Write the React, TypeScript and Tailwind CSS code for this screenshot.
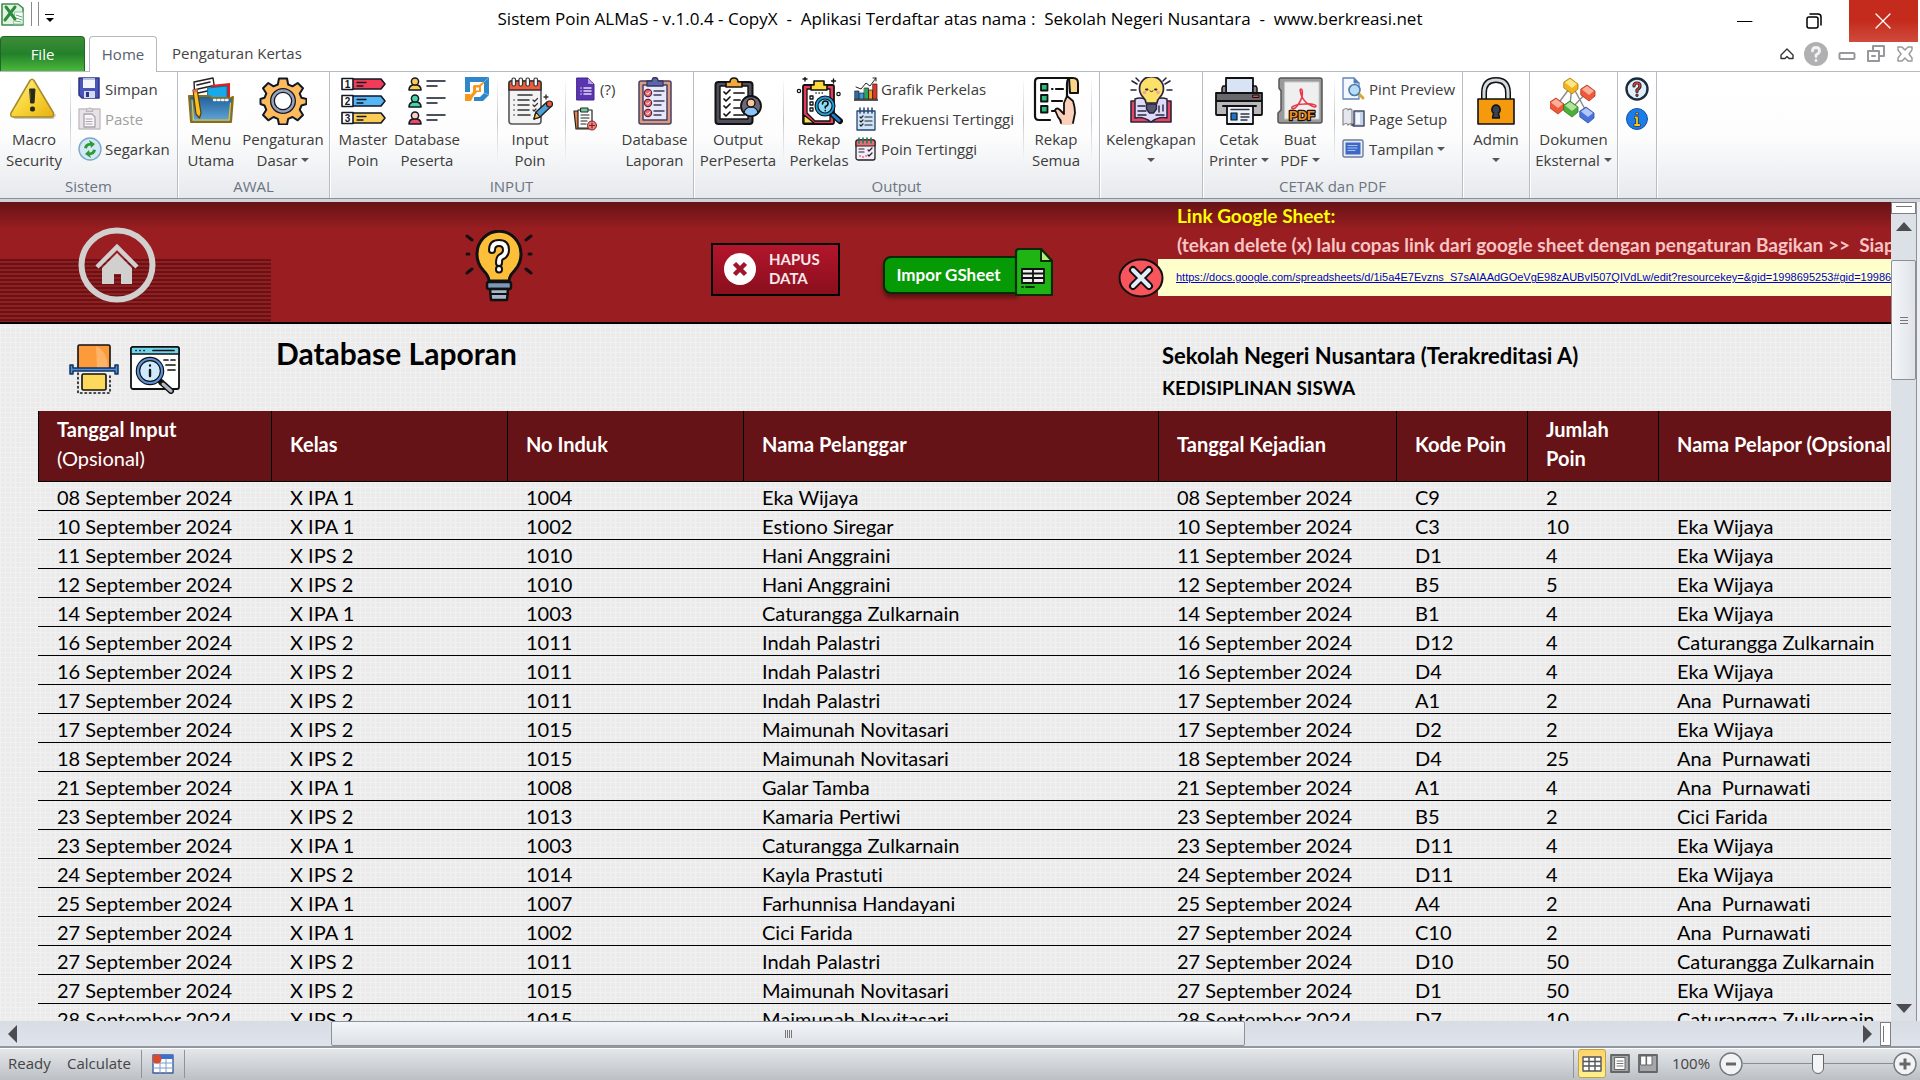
import type { ReactNode } from "react";

const ROWS: string[][] = [
  ["08 September 2024", "X IPA 1", "1004", "Eka Wijaya", "C9", "2", ""],
  ["10 September 2024", "X IPA 1", "1002", "Estiono Siregar", "C3", "10", "Eka Wijaya"],
  ["11 September 2024", "X IPS 2", "1010", "Hani Anggraini", "D1", "4", "Eka Wijaya"],
  ["12 September 2024", "X IPS 2", "1010", "Hani Anggraini", "B5", "5", "Eka Wijaya"],
  ["14 September 2024", "X IPA 1", "1003", "Caturangga Zulkarnain", "B1", "4", "Eka Wijaya"],
  ["16 September 2024", "X IPS 2", "1011", "Indah Palastri", "D12", "4", "Caturangga Zulkarnain"],
  ["16 September 2024", "X IPS 2", "1011", "Indah Palastri", "D4", "4", "Eka Wijaya"],
  ["17 September 2024", "X IPS 2", "1011", "Indah Palastri", "A1", "2", "Ana  Purnawati"],
  ["17 September 2024", "X IPS 2", "1015", "Maimunah Novitasari", "D2", "2", "Eka Wijaya"],
  ["18 September 2024", "X IPS 2", "1015", "Maimunah Novitasari", "D4", "25", "Ana  Purnawati"],
  ["21 September 2024", "X IPA 1", "1008", "Galar Tamba", "A1", "4", "Ana  Purnawati"],
  ["23 September 2024", "X IPS 2", "1013", "Kamaria Pertiwi", "B5", "2", "Cici Farida"],
  ["23 September 2024", "X IPA 1", "1003", "Caturangga Zulkarnain", "D11", "4", "Eka Wijaya"],
  ["24 September 2024", "X IPS 2", "1014", "Kayla Prastuti", "D11", "4", "Eka Wijaya"],
  ["25 September 2024", "X IPA 1", "1007", "Farhunnisa Handayani", "A4", "2", "Ana  Purnawati"],
  ["27 September 2024", "X IPA 1", "1002", "Cici Farida", "C10", "2", "Ana  Purnawati"],
  ["27 September 2024", "X IPS 2", "1011", "Indah Palastri", "D10", "50", "Caturangga Zulkarnain"],
  ["27 September 2024", "X IPS 2", "1015", "Maimunah Novitasari", "D1", "50", "Eka Wijaya"],
  ["28 September 2024", "X IPS 2", "1015", "Maimunah Novitasari", "D7", "10", "Caturangga Zulkarnain"],
];

const INK = "#111827";

function Svg({ s = 48, w, h, children, box }: { s?: number; w?: number; h?: number; box?: string; children: ReactNode }) {
  return (
    <svg width={w ?? s} height={h ?? s} viewBox={box ?? `0 0 ${w ?? s} ${h ?? s}`} fill="none" strokeLinecap="round" strokeLinejoin="round" aria-hidden="true" className="block shrink-0">
      {children}
    </svg>
  );
}

/* ---------- ribbon icons, large ---------- */

const WarningIcon = () => (
  <Svg>
    <defs>
      <linearGradient id="warn" x1="0" y1="0" x2="1" y2="1">
        <stop offset="0" stopColor="#fff3a0" />
        <stop offset=".5" stopColor="#f8d53a" />
        <stop offset="1" stopColor="#e8b010" />
      </linearGradient>
    </defs>
    <path d="M5 41h38l2-3" stroke="#c9c9c9" strokeWidth="2" />
    <path d="M20 3.500 Q22 1 24 3.500 L43.500 36 Q44 40 41 40 H3 Q0 40 1 36 Z" fill="url(#warn)" stroke="#a88a28" strokeWidth="1.500" />
    <path d="M20 12 h5 l-1 14 h-3z" fill="#2a2a1c" stroke="#2a2a1c" />
    <rect x="20" y="29.500" width="5" height="5" rx="2" fill="#2a2a1c" />
  </Svg>
);

const FolderIcon = () => (
  <Svg>
    <defs>
      <linearGradient id="fold" x1="0" y1="0" x2="0" y2="1">
        <stop offset="0" stopColor="#1f5f97" />
        <stop offset="1" stopColor="#63a8dc" />
      </linearGradient>
    </defs>
    <path d="M7 5 L26 1 L29 20 L8 22z" fill="#fff" stroke="#222" strokeWidth="1.400" />
    <path d="M10 8l13-3M11 12l14-3M11 16l14-3" stroke="#222" strokeWidth="1.600" />
    <path d="M24 8 L43 6 V22 H24z" fill="#e11d1d" />
    <path d="M21 11 L40 9 V24 H21z" fill="#18a9ea" stroke="#0b6fa5" />
    <path d="M2 19 H22 L25 21 H44 L46 20 L44 45 H4z" fill="url(#fold)" stroke="#8c6d12" strokeWidth="2" />
    <path d="M5 23 L6.500 43 H42 L43.500 26" stroke="#e9c432" strokeWidth="1.200" />
    <path d="M27 23h15" stroke="#e8f4ff" strokeWidth="2.400" strokeDasharray="1.500 2.500" />
    <path d="M6 13 l4-1 4 24 -1.500 5 -3.500-4z" fill="#fbbf24" stroke="#5c3d00" strokeWidth="1.200" />
    <path d="M6 13l4-1 .7 3-4 .8z" fill="#e76a6a" />
  </Svg>
);

const GearIcon = () => (
  <Svg>
    <path
      d="M20 1.500h8l1.200 6 4.300 1.800 5.200-3.300 5.300 5.300-3.300 5.200 1.800 4.300 5 1.200v5l-5 1.500-1.800 4.300 3.300 5.200-5.300 5.300-5.200-3.300-4.300 1.800-1.200 5.700h-8l-1.200-5.700-4.300-1.800-5.200 3.300L4 38l3.300-5.200-1.800-4.300-4-1.500v-5l4-1.200 1.800-4.300L4 11.300 9.300 6l5.200 3.300 4.300-1.800z"
      fill="#fdbb5c" stroke={INK} strokeWidth="2"
    />
    <circle cx="24" cy="24" r="10.500" fill="#fff" stroke={INK} strokeWidth="5" />
    <circle cx="24" cy="24" r="10.500" stroke="#9ca3b8" strokeWidth="2.400" />
  </Svg>
);

const MasterIcon = () => (
  <Svg>
    {[
      ["#f23c57", "1", 7],
      ["#55b5f5", "2", 24],
      ["#fbcb54", "3", 41],
    ].map(([c, n, y]) => (
      <g key={n as string} transform={`translate(0 ${(y as number) - 7})`}>
        <path d="M13 2 H42 L46 7 L42 12 H13z" fill={c as string} stroke={INK} strokeWidth="1.600" />
        <rect x="3" y="1.500" width="11" height="11" fill="#fff" stroke={INK} strokeWidth="1.600" />
        <path d="M18 5.500h9M18 9h6" stroke={INK} strokeWidth="1.300" />
        <text x="8.500" y="11" fontSize="10" fontWeight="700" textAnchor="middle" fill={INK} fontFamily="Liberation Sans, sans-serif">{n}</text>
      </g>
    ))}
  </Svg>
);

const PeopleIcon = () => (
  <Svg>
    {["#fbcb54", "#4bd6a0", "#f0485c"].map((c, i) => (
      <g key={c} transform={`translate(0 ${i * 17})`}>
        <path d="M6 13 q0-5 6-5.500 q6 .5 6 5.500z" fill={c} stroke={INK} strokeWidth="1.600" />
        <circle cx="12" cy="4.500" r="3.600" fill={i === 2 ? "#ffd0c0" : c} stroke={INK} strokeWidth="1.500" />
        <path d="M24 4h18M24 9h10" stroke={INK} strokeWidth="1.500" />
      </g>
    ))}
  </Svg>
);

const NotepadIcon = () => (
  <Svg>
    <rect x="3" y="4" width="32" height="43" rx="3" fill="#f3f3f3" stroke="#555" strokeWidth="1.600" />
    <path d="M3 13V6q0-2 2-2h28q2 0 2 2v7z" fill="#ef5a3c" stroke="#333" strokeWidth="1.500" />
    {[7, 14, 21, 29].map((x) => (
      <rect key={x} x={x - 1} y="1" width="3.500" height="8" rx="1.500" fill="#fff" stroke="#333" strokeWidth="1.200" />
    ))}
    <path d="M12 18h14" stroke="#333" strokeWidth="1.600" />
    <path d="M8 23h.1M12 23h11M8 28h.1M12 28h11M8 33h.1M12 33h11M8 38h.1M12 38h12" stroke="#333" strokeWidth="1.500" />
    <path d="M27 23l1.500 1.500 3-3M27 28l1.500 1.500 3-3M27 33l1 1 2-2" stroke="#333" strokeWidth="1.200" />
    <path d="M28 42 L30 35 L41 25 L45 29.500 L34 40z" fill="#4da3d8" stroke="#222" strokeWidth="1.500" />
    <path d="M28 42l2-7 4 5z" fill="#fbcb54" stroke="#222" strokeWidth="1.200" />
    <circle cx="43.500" cy="27" r="3" fill="#ef5a3c" stroke="#222" strokeWidth="1.200" />
    <path d="M40 18v4M38 20h4" stroke="#333" strokeWidth="1.400" />
  </Svg>
);

const ClipboardChecks = () => (
  <Svg>
    <rect x="8" y="4" width="32" height="43" rx="2" fill="#d79b86" stroke="#4a3f5c" strokeWidth="1.500" />
    <path d="M12 8h24v35H12z" fill="#e8e8fb" stroke="#4a3f5c" strokeWidth="1.500" />
    <path d="M16 4h5q0-3.500 3-3.500t3 3.500h5v5H16z" fill="#5b66a8" stroke="#353560" strokeWidth="1.300" />
    {[16, 26, 36].map((y) => (
      <g key={y}>
        <circle cx="17" cy={y} r="3.600" fill="#ea6a6f" stroke="#6b2434" strokeWidth="1.200" />
        <path d={`M15.500 ${y}l1.200 1.300 2.300-2.500`} stroke="#fff" strokeWidth="1" />
        <path d={`M23 ${y - 2}h10M23 ${y + 2}h7`} stroke="#3c3c5c" strokeWidth="1.400" />
      </g>
    ))}
  </Svg>
);

const OutputIcon = () => (
  <Svg>
    <rect x="1.500" y="5" width="37" height="42" rx="3" fill="#50505c" stroke="#111" strokeWidth="2" />
    <path d="M6 9h28v33H6z" fill="#fff" stroke="#111" strokeWidth="1.400" />
    <path d="M12 5h4q0-4 4-4t4 4h4v5H12z" fill="#f2a93c" stroke="#111" strokeWidth="1.600" />
    <path d="M10 15l2 2 4-4M10 22l2 2 4-4M10 29l2 2 4-4M10 37l2 2 4-4" stroke="#111" strokeWidth="1.700" />
    <path d="M20 16h10M20 23h6M20 31h6M20 38h10" stroke="#111" strokeWidth="1.700" />
    <circle cx="37" cy="29" r="10" fill="#6d6778" stroke="#111" strokeWidth="1.800" />
    <path d="M30 36q1-6 7-6t7 6q-3 3-7 3t-7-3z" fill="#8cc4f8" stroke="#111" strokeWidth="1.200" />
    <circle cx="37" cy="26" r="4" fill="#f8c8a0" stroke="#111" strokeWidth="1.400" />
  </Svg>
);

const RekapIcon = () => (
  <Svg>
    <rect x="8" y="8" width="31" height="39" rx="1.500" fill="#e83a5c" stroke="#111" strokeWidth="1.800" />
    <path d="M12 12h23v32H20l-8-8z" fill="#fff" stroke="#111" strokeWidth="1.300" />
    <path d="M9 38l10 8H9z" fill="#fbe04c" stroke="#111" strokeWidth="1.200" />
    <path d="M16 8h3V4h10v4h3v5H16z" fill="#fbd83c" stroke="#111" strokeWidth="1.600" />
    <path d="M21 16h7" stroke="#111" strokeWidth="1.600" strokeDasharray=".1 3" />
    <path d="M15 19h3v3h-3zM15 25h3v3h-3zM15 31h3v3h-3z" stroke="#111" strokeWidth="1.300" />
    <path d="M37 37l8 7" stroke="#111" strokeWidth="6" />
    <path d="M38 38l6 5.500" stroke="#1c7fd0" strokeWidth="3" />
    <circle cx="30" cy="29" r="8.500" fill="#8cdcf8" stroke="#111" strokeWidth="4" />
    <circle cx="30" cy="29" r="8.500" stroke="#1c9fe0" strokeWidth="1.800" />
    <path d="M27.500 27q0-3 2.800-3t2.700 2.500-2.700 3v1.500M30.300 33.500v.2" stroke="#111" strokeWidth="1.600" />
    <path d="M10 0v4M8 2h4M38.500 2v4M36.500 4h4" stroke="#111" strokeWidth="1.400" />
    <circle cx="4" cy="14" r="1.700" stroke="#111" strokeWidth="1.200" />
    <circle cx="43.500" cy="17" r="1.700" stroke="#111" strokeWidth="1.200" />
  </Svg>
);

const HandListIcon = () => (
  <Svg>
    <path d="M37 1h4q5 0 5 5v10h-8z" fill="#fcd489" stroke="#111" strokeWidth="2" />
    <path d="M18 43H7q-4 0-4-4V5q0-4 4-4h31q-3 1-3 6v20" fill="#fff" stroke="#111" strokeWidth="2.200" />
    {[7, 18, 29].map((y) => (
      <rect key={y} x="9" y={y} width="6.500" height="6.500" fill="#2ebd7f" stroke="#111" strokeWidth="1.800" />
    ))}
    <path d="M20 12h.5M24 12h7M20 24h10M20 34h4" stroke="#111" strokeWidth="2.200" />
    <path d="M29 48q0-5-3-8l-3-8q2-3 5 1l4 4V24q0-4 3.500-4L41 23q3 5 2 13-1 5-3 12z" fill="#fbd0ba" />
    <path d="M29 46q0-3-3-6l-3-7q2-3 5 0l4 4V26l3-7 6 5q2 6 2 12-1 5-2 10" stroke="#111" strokeWidth="1.800" />
  </Svg>
);

const IdeaBookIcon = () => (
  <Svg>
    <path d="M4 24h40v21H4z" fill="#e4475f" stroke="#2b2340" strokeWidth="1.600" />
    <path d="M8 22q8-3 16 4 8-7 16-4v19q-8-2-16 4-8-6-16-4z" fill="#dcdcf8" stroke="#2b2340" strokeWidth="1.500" />
    <path d="M11 29h7M11 34h8M11 38h8M29 38h8M32 29v6M36 28v6" stroke="#2b2340" strokeWidth="1.400" />
    <path d="M19 26q0-3-3-6a12 12 0 1 1 17 0q-3 3-3 6z" fill="#fbe168" stroke="#2b2340" strokeWidth="1.700" />
    <path d="M19.500 27h10v5l-3 4h-4l-3-4z" fill="#56566e" stroke="#2b2340" strokeWidth="1.400" />
    <path d="M19 12.500h1.500M28 12.500h1.500" stroke="#2b2340" strokeWidth="1.800" />
    <path d="M23 14q1.500 1.500 3 0" stroke="#2b2340" />
    <circle cx="17.500" cy="15.500" r="1.800" fill="#f8a0a0" />
    <circle cx="31" cy="15.500" r="1.800" fill="#f8a0a0" />
    <path d="M5 4l5 3M9 1l3 3M4 13h5M43 4l-5 3M39 1l-3 3M45 13h-5" stroke="#2b2340" strokeWidth="1.500" />
  </Svg>
);

const PrinterIcon = () => (
  <Svg>
    <rect x="11" y="1" width="27" height="20" fill="#d8e4f6" stroke="#111" strokeWidth="1.800" />
    <path d="M8 9h3v8H7V11zM38 9h3l1 2v6h-4z" fill="#888" stroke="#111" strokeWidth="1.500" />
    <rect x="1" y="16" width="46" height="8" fill="#68686c" stroke="#111" strokeWidth="1.800" />
    <rect x="1" y="24" width="46" height="14" rx="1" fill="#b8b8ba" stroke="#111" strokeWidth="1.800" />
    <path d="M8 29h33" stroke="#111" strokeWidth="2" />
    <rect x="38" y="18" width="6" height="2.500" fill="#e04848" stroke="#111" />
    <rect x="12" y="29" width="26" height="18" fill="#eef4fb" stroke="#111" strokeWidth="1.800" />
    <rect x="16" y="36" width="6" height="7" fill="#1c74c8" stroke="#111" strokeWidth="1.200" />
    <path d="M16 32.500h18M26 37h8M26 40h8M26 43h6" stroke="#334" strokeWidth="1.400" />
  </Svg>
);

const PdfIcon = () => (
  <Svg w={46}>
    <path d="M2 3q0-2 2-2h39q2 0 2 2v41q0 2-2 2H3q-2 0-2-2V36l3-3V14L2 11z" fill="#9a9a9a" stroke="#555" strokeWidth="1.500" />
    <path d="M8 5h34v37H8z" fill="#efefef" stroke="#ccc" />
    <path d="M24 12q2 0 1 8-3 8-7 11-4 2-3-1 5-3 12-3 10-1 12 2 0 2-4 0-7-3-10-9-3-8-1-8z" stroke="#e8384a" strokeWidth="1.600" />
    <text x="25" y="43" textAnchor="middle" fontSize="13" fontWeight="700" fill="#f08c1c" stroke="#111" strokeWidth="2.500" paintOrder="stroke" fontFamily="Liberation Sans, sans-serif">PDF</text>
  </Svg>
);

const LockIcon = () => (
  <Svg w={40}>
    <path d="M8 24V16q0-13 12-13t12 13v8" stroke="#111" strokeWidth="6" strokeLinecap="butt" />
    <path d="M8 24V16q0-13 12-13t12 13v8" stroke="#d5d9de" strokeWidth="3" strokeLinecap="butt" />
    <rect x="2" y="22" width="36" height="25" fill="#f59a0c" stroke="#111" strokeWidth="1.600" />
    <path d="M20 28a4.500 4.500 0 0 1 2.500 8l1 5h-7l1-5a4.500 4.500 0 0 1 2.500-8z" fill="#374151" stroke="#111" strokeWidth="1.400" />
  </Svg>
);

const NodesIcon = () => (
  <Svg>
    <path d="M22 8L7 28M22 8l15 28M37 15L22 31M22 8l-2 20" stroke="#888" strokeWidth="1.400" />
    {[
      ["#f2b41c", "#fde58a", "#a87808", 14, 1],
      ["#f0583a", "#fbb09c", "#b03018", 31, 8],
      ["#f0583a", "#fbb09c", "#b03018", 0, 21],
      ["#4cae3c", "#b4e49c", "#2c7820", 14, 24],
      ["#4a72dc", "#b4c8f8", "#2c4ca8", 30, 30],
    ].map(([c, l, d, x, y], i) => (
      <g key={i} transform={`translate(${x} ${y})`}>
        <path d="M0 4L6 0l8 6v5l-6 5-8-6z" fill={c as string} stroke={d as string} strokeWidth=".8" />
        <path d="M1 4.500L6 1l7 5-5 4z" fill={l as string} />
      </g>
    ))}
  </Svg>
);

/* ---------- ribbon icons, small ---------- */

const SaveIcon = () => (
  <Svg s={24}>
    <path d="M1 1h20v20H4l-3-3z" fill="#4a53b8" stroke="#2c3484" strokeWidth="1.500" />
    <path d="M5 1h12v10H5z" fill="#f2f4fb" />
    <path d="M5 1h12v2H5z" fill="#b8c0e0" />
    <path d="M6 14h11v7H6z" fill="#d4daf0" />
    <path d="M8 15h3v5H8z" fill="#2c3484" />
  </Svg>
);

const PasteIcon = () => (
  <Svg s={24}>
    <path d="M1 2h21v20H1z" fill="#e6e2e6" stroke="#c4bec4" strokeWidth="1.400" />
    <path d="M8 4q0-3 3.500-3T15 4z" fill="#ddd" stroke="#b8b2b8" />
    <path d="M6 7h8l3 3v10H6z" fill="#f8f6f8" stroke="#aaa4aa" strokeWidth="1.300" />
    <path d="M8 12h6M8 14.500h6M8 17h6" stroke="#aaa4aa" />
  </Svg>
);

const RefreshIcon = () => (
  <Svg s={24}>
    <circle cx="12" cy="12" r="11" fill="#d4e8f6" stroke="#7ca8cc" strokeWidth="1.400" />
    <path d="M6 11q1-5 6-5l-1-3 6 4-4 4-.5-2.500q-3 0-3.500 3z" fill="#2e9a34" />
    <path d="M18 13q-1 5-6 5l1 3-6-4 4-4 .5 2.500q3 0 3.500-3z" fill="#2e9a34" />
  </Svg>
);

const LogoIcon = () => (
  <Svg s={24}>
    <path d="M0 0h24v18l-6 6h-9v-4h6l4-4V5H5v10H0z" fill="#2f86c8" />
    <path d="M19 5l5-5M19 16l5 2" stroke="#8cc0e8" strokeWidth=".8" />
    <path d="M0 17h5l3 3-2 4H0z" fill="#f8991c" />
    <path d="M9 8h7v7h-4l-4 5H4l4-5V9z" fill="#f8991c" />
    <path d="M11 10.500h3v3h-3z" fill="#fff" />
    <path d="M14.500 9L18 6" stroke="#f8991c" strokeWidth="2" />
  </Svg>
);

const FormIcon = () => (
  <Svg s={24}>
    <path d="M4 1h11l6 6v16H4z" fill="#5b34b0" stroke="#43228c" />
    <path d="M15 1l6 6h-6z" fill="#b39ce4" />
    <path d="M11 11h7M11 14h7M11 17h7M8 11h.1M8 14h.1M8 17h.1" stroke="#e4dcf8" strokeWidth="1.500" />
  </Svg>
);

const ClipPlusIcon = () => (
  <Svg s={24}>
    <path d="M1 4h15v18H3z" fill="#e8824c" stroke="#222" strokeWidth="1.200" />
    <path d="M5 3h14v18H5z" fill="#fff" stroke="#222" strokeWidth="1.200" />
    <path d="M8 1h7v4H8z" fill="#6fd0a0" stroke="#222" />
    <path d="M8 8h8M8 11h8M8 14h6M8 17h5" stroke="#222" strokeWidth="1.200" />
    <circle cx="19" cy="18.500" r="4.500" fill="#f08484" stroke="#802020" />
    <path d="M16.500 18.500h5M19 16v5" stroke="#802020" strokeWidth="1.200" />
  </Svg>
);

const ChartIcon = () => (
  <Svg s={24}>
    <path d="M0 23h24" stroke="#222" strokeWidth="1.500" />
    <path d="M1 14h4v8H1z" fill="#2c6cb0" stroke="#222" strokeWidth=".7" />
    <path d="M6 16h4v6H6z" fill="#37a0e0" stroke="#222" strokeWidth=".7" />
    <path d="M10.500 11h4v11h-4z" fill="#20a860" stroke="#222" strokeWidth=".7" />
    <path d="M15 13h3.500v9H15z" fill="#f49a1c" stroke="#222" strokeWidth=".7" />
    <path d="M19 7h4v15h-4z" fill="#e43424" stroke="#222" strokeWidth=".7" />
    <path d="M2 10l5 2 5-6 4 3 6-8M19 1h3v3" stroke="#222" />
  </Svg>
);

const ListBookIcon = () => (
  <Svg s={24}>
    <path d="M3 4h18v19H3z" fill="#cfe4f8" stroke="#26466c" strokeWidth="1.300" />
    <path d="M6 1v5M10 1v5M14 1v5M18 1v5" stroke="#26466c" strokeWidth="1.500" />
    <path d="M11 10h7M11 14h7M11 18h7M6 10l1 1 2-2M6 14l1 1 2-2M6 18l1 1 2-2" stroke="#222" strokeWidth="1.200" />
  </Svg>
);

const PointBookIcon = () => (
  <Svg s={24}>
    <rect x="2" y="3" width="19" height="20" rx="2" fill="#f4ecfa" stroke="#222" strokeWidth="1.300" />
    <path d="M2 9V5q0-2 2-2h15q2 0 2 2v4z" fill="#f06a74" stroke="#222" strokeWidth="1.100" />
    <path d="M5 1v5M9 1v5M13 1v5M17 1v5" stroke="#1c7a5c" strokeWidth="1.600" />
    <path d="M5 12h5M5 15h5M14 13l1 1 3-3M14 18l1 1 3-3" stroke="#222" strokeWidth="1.200" />
    <path d="M6 19h.1M9 20h.1M12 19h.1" stroke="#f06a74" strokeWidth="1.800" />
  </Svg>
);

const PreviewIcon = () => (
  <Svg s={24}>
    <path d="M1 1h11l5 5v16H1z" fill="#f4f8fe" stroke="#6484b8" strokeWidth="1.300" />
    <path d="M12 1v5h5" fill="#4878c0" stroke="#6484b8" />
    <path d="M17 17l4 4" stroke="#d8a830" strokeWidth="3" />
    <circle cx="12.500" cy="13" r="5.500" fill="#b8dcf4" stroke="#4c7cac" strokeWidth="1.600" />
  </Svg>
);

const PageSetupIcon = () => (
  <Svg s={24}>
    <path d="M1 3q4-3 5 0 2-2 4 0v14q-2-1-4 1-1-3-5 0z" fill="#e4e8ee" stroke="#888" strokeWidth="1.200" />
    <path d="M12 4h10v15H12z" fill="#c4d4f0" stroke="#444c60" strokeWidth="1.500" />
    <path d="M14 6h4v11h-4z" fill="#f4f8fe" />
    <path d="M8 18l4 2v-4" fill="#555" />
  </Svg>
);

const ScreenIcon = () => (
  <Svg s={24}>
    <rect x="1" y="3" width="20" height="17" rx="1.500" fill="#e8ecf4" stroke="#6c7c9c" strokeWidth="1.400" />
    <path d="M3.500 5.500h15v12h-15z" fill="#3c68c8" />
    <path d="M6 8.500h9M6 11h9M6 13.500h7" stroke="#a8c4f4" strokeWidth="1.200" />
  </Svg>
);

const HelpIcon = () => (
  <Svg s={24}>
    <circle cx="12" cy="12" r="10.500" fill="#e0f0fb" stroke="#1c2c3c" strokeWidth="2.400" />
    <path d="M9 9q0-3 3-3t3 3q0 2-3 4v1.500M12 18v.3" stroke="#222" strokeWidth="3.200" />
    <path d="M9 9q0-3 3-3t3 3q0 2-3 4v1.500M12 18v.3" stroke="#e43c3c" strokeWidth="1.400" />
  </Svg>
);

const InfoIcon = () => (
  <Svg s={24}>
    <circle cx="12" cy="12" r="10.500" fill="#1c7ce8" stroke="#1850a8" />
    <path d="M10.500 10.500H12V18M10 18h4.500M12 6.500v.2" stroke="#222" strokeWidth="3" />
    <path d="M10.500 10.500H12V18M10 18h4.500M12 6.500v.2" stroke="#fcc820" strokeWidth="1.800" />
  </Svg>
);

/* ---------- ribbon building blocks ---------- */

const Caret = () => <span className="inline-block h-0 w-0 border-x-4 border-t-4 border-x-transparent border-t-[#555]" />;

function Big({ icon, lines, caret, w }: { icon: ReactNode; lines: string[]; caret?: boolean; w: string }) {
  return (
    <button type="button" className={`flex shrink-0 flex-col items-center whitespace-nowrap text-[15px] leading-[21px] ${w}`}>
      {icon}
      <span className="mt-1">{lines[0]}</span>
      <span className="flex h-5 items-center gap-1">
        {lines[1]}
        {caret && <Caret />}
      </span>
    </button>
  );
}

function Small({ icon, label, caret, muted, name }: { icon: ReactNode; label?: string; caret?: boolean; muted?: boolean; name?: string }) {
  return (
    <button type="button" aria-label={name} disabled={muted} className={`flex h-[30px] items-start gap-[3px] whitespace-nowrap text-[15px] leading-6 ${muted ? "text-[#a0a0a0]" : ""}`}>
      {icon}
      {label && <span>{label}</span>}
      {caret && <span className="flex h-6 items-center"><Caret /></span>}
    </button>
  );
}

const Rule = ({ m }: { m: string }) => <span className={`h-[86px] w-px shrink-0 bg-gradient-to-b from-transparent via-[#c4c8ce] to-transparent ${m}`} />;

function Group({ w, label, children }: { w: string; label?: string; children: ReactNode }) {
  return (
    <section className={`flex shrink-0 flex-col border-r border-[#b9bdc3] pt-[5px] shadow-[1px_0_0_#fff] ${w}`}>
      <div className="flex h-[99px] items-start">{children}</div>
      <h2 className="text-center text-[15px] leading-5 font-normal text-[#6b7480]">{label}</h2>
    </section>
  );
}

function Ribbon() {
  return (
    <div className="flex h-32 shrink-0 overflow-hidden border-t border-b border-t-[#b4babf] border-b-[#8b9097] bg-gradient-to-b from-white via-[#fdfdfd] to-[#e6e9ed] text-[#3c3c3c]">
      <Group w="w-[178px]" label="Sistem">
        <Big w="w-[68px]" icon={<WarningIcon />} lines={["Macro", "Security"]} />
        <Rule m="ml-[2px] mr-[7px]" />
        <div>
          <Small icon={<SaveIcon />} label="Simpan" />
          <Small icon={<PasteIcon />} label="Paste" muted />
          <Small icon={<RefreshIcon />} label="Segarkan" />
        </div>
      </Group>
      <Group w="w-[152px]" label="AWAL">
        <Big w="w-[66px]" icon={<FolderIcon />} lines={["Menu", "Utama"]} />
        <Big w="w-[78px]" icon={<GearIcon />} lines={["Pengaturan", "Dasar"]} caret />
      </Group>
      <Group w="w-[364px]" label="INPUT">
        <Big w="w-[66px]" icon={<MasterIcon />} lines={["Master", "Poin"]} />
        <Big w="w-[62px]" icon={<PeopleIcon />} lines={["Database", "Peserta"]} />
        <div className="ml-[7px]">
          <Small icon={<LogoIcon />} name="Logo" />
        </div>
        <Rule m="ml-2" />
        <Big w="w-[64px]" icon={<NotepadIcon />} lines={["Input", "Poin"]} />
        <Rule m="ml-[3px] mr-[7px]" />
        <div className="w-[44px]">
          <Small icon={<FormIcon />} label="(?)" />
          <Small icon={<ClipPlusIcon />} name="Tambah" />
        </div>
        <Big w="w-[75px]" icon={<ClipboardChecks />} lines={["Database", "Laporan"]} />
      </Group>
      <Group w="w-[406px]" label="Output">
        <Big w="w-[88px]" icon={<OutputIcon />} lines={["Output", "PerPeserta"]} />
        <Rule m="ml-px" />
        <Big w="w-[70px]" icon={<RekapIcon />} lines={["Rekap", "Perkelas"]} />
        <div className="w-[168px]">
          <Small icon={<ChartIcon />} label="Grafik Perkelas" />
          <Small icon={<ListBookIcon />} label="Frekuensi Tertinggi" />
          <Small icon={<PointBookIcon />} label="Poin Tertinggi" />
        </div>
        <Rule m="ml-px" />
        <Big w="w-[64px]" icon={<HandListIcon />} lines={["Rekap", "Semua"]} />
        <Rule m="ml-[3px]" />
      </Group>
      <Group w="w-[103px]">
        <Big w="w-[102px]" icon={<IdeaBookIcon />} lines={["Kelengkapan"]} caret />
      </Group>
      <Group w="w-[260px]" label="CETAK dan PDF">
        <Big w="w-[72px]" icon={<PrinterIcon />} lines={["Cetak", "Printer"]} caret />
        <Big w="w-[50px]" icon={<PdfIcon />} lines={["Buat", "PDF"]} caret />
        <Rule m="ml-[9px] mr-[7px]" />
        <div>
          <Small icon={<PreviewIcon />} label="Pint Preview" />
          <Small icon={<PageSetupIcon />} label="Page Setup" />
          <Small icon={<ScreenIcon />} label="Tampilan" caret />
        </div>
      </Group>
      <Group w="w-[67px]">
        <Big w="w-[66px]" icon={<LockIcon />} lines={["Admin"]} caret />
      </Group>
      <Group w="w-[88px]">
        <Big w="w-[87px]" icon={<NodesIcon />} lines={["Dokumen", "Eksternal"]} caret />
      </Group>
      <Group w="w-[39px]">
        <div className="mx-auto">
          <Small icon={<HelpIcon />} name="Bantuan" />
          <Small icon={<InfoIcon />} name="Info" />
        </div>
      </Group>
    </div>
  );
}

function TitleBar() {
  return (
    <header className="flex h-9 shrink-0 items-start justify-between">
      <div className="flex w-[400px] items-center gap-[6px] pt-[2px] pl-px">
        <Svg s={24}>
          <path d="M1 2h16l5 4v17H1z" fill="#e4f2e4" stroke="#3c8c4c" strokeWidth="1.600" />
          <path d="M14 10h8v12h-9z" fill="#fff" stroke="#8cc49c" />
          <path d="M15 13l6 2M15 16l6 2M14 19l6 1" stroke="#5cac6c" />
          <path d="M5 5l9 12M14 5L4 18" stroke="#2c8c3c" strokeWidth="3" />
        </Svg>
        <span className="h-6 w-[8px] border-x border-[#8a8a8a]" />
        <button type="button" aria-label="Kustomisasi bilah akses cepat" className="flex flex-col items-center gap-[3px] pt-2">
          <span className="h-px w-[9px] bg-black" />
          <span className="h-0 w-0 border-x-4 border-t-4 border-x-transparent border-t-black" />
        </button>
      </div>
      <h1 className="pt-[7px] text-[17px] leading-6 font-normal whitespace-pre text-black">
        {"Sistem Poin ALMaS - v.1.0.4 - CopyX  -  Aplikasi Terdaftar atas nama :  Sekolah Negeri Nusantara  -  www.berkreasi.net"}
      </h1>
      <div className="flex w-[400px] justify-end pr-[2px]">
        <button type="button" aria-label="Minimalkan" className="grid h-[42px] w-[69px] place-items-center">
          <Svg s={16}><path d="M0 8.500h15" stroke="#000" /></Svg>
        </button>
        <button type="button" aria-label="Pulihkan" className="grid h-[42px] w-[69px] place-items-center">
          <Svg s={16}>
            <path d="M4 1h8q3 0 3 3v8" stroke="#000" strokeWidth="1.500" />
            <rect x="1" y="4" width="11" height="11" rx="2" stroke="#000" strokeWidth="1.500" />
          </Svg>
        </button>
        <button type="button" aria-label="Tutup" className="grid h-[42px] w-[69px] place-items-center bg-gradient-to-b from-[#c42b1c] via-[#c42b1c] to-[#d04a3c]">
          <Svg s={16}><path d="M1 1l14 14M15 1L1 15" stroke="#fff" strokeWidth="1.300" /></Svg>
        </button>
      </div>
    </header>
  );
}

function Tabs() {
  return (
    <nav className="flex h-[35px] shrink-0 items-end justify-between text-[15px]">
      <div className="flex h-full items-end">
        <button type="button" className="h-[35px] w-[85px] rounded-t-[4px] border border-b-0 border-[#1c6a20] bg-gradient-to-b from-[#3c8c38] via-[#23812a] to-[#4cb83c] text-white">File</button>
        <button type="button" className="relative z-10 -mb-px ml-1 h-9 w-[68px] rounded-t-[4px] border border-b-0 border-[#b4babf] bg-white text-[#566070]">Home</button>
        <button type="button" className="h-[35px] px-[15px] text-[#444]">Pengaturan Kertas</button>
      </div>
      <div className="flex h-[35px] items-center gap-[10px] pr-[6px]">
        <button type="button" aria-label="Ciutkan pita"><Svg s={14}><path d="M1 8l6-6 6 6v3.500H9L7 9.500l-2 2H1z" stroke="#333" strokeWidth="1.400" /></Svg></button>
        <button type="button" aria-label="Bantuan">
          <Svg s={24}>
            <circle cx="12" cy="12" r="12" fill="#b0b0b2" />
            <path d="M8.500 9q0-3.500 3.500-3.500T15.500 9q0 2-3.500 4v1.500M12 18.500v.1" stroke="#f2f2f2" strokeWidth="2.800" />
          </Svg>
        </button>
        <button type="button" aria-label="Minimalkan jendela"><Svg w={18} h={20}><rect x="1.500" y="9" width="15" height="6" rx="1" stroke="#98989c" strokeWidth="2" /></Svg></button>
        <button type="button" aria-label="Pulihkan jendela">
          <Svg s={20}>
            <path d="M7 6V2h11v10h-4" stroke="#98989c" strokeWidth="2" />
            <rect x="2" y="7" width="11" height="10" stroke="#98989c" strokeWidth="2" />
            <path d="M6 12h3" stroke="#98989c" strokeWidth="2" />
          </Svg>
        </button>
        <button type="button" aria-label="Tutup jendela">
          <Svg s={18}>
            <path d="M2 2h4l3 3 3-3h4v3l-3 4 3 4v3h-4l-3-3-3 3H2v-3l3-4-3-4z" stroke="#98989c" strokeWidth="1.500" strokeDasharray="3 1" />
          </Svg>
        </button>
      </div>
    </nav>
  );
}

function Banner() {
  return (
    <div className="flex h-[122px] shrink-0 border-b-2 border-black bg-[linear-gradient(#661316_0px,#9a1e21_28px)]">
      <div className="flex w-[271px] shrink-0 flex-col justify-end">
        <div className="relative h-[63px] bg-[repeating-linear-gradient(#6b1013_0px,#6b1013_2px,#8c2023_2px,#8c2023_4px)]">
          <button type="button" aria-label="Beranda" className="absolute -top-8 left-[78px]">
            <Svg w={78} h={76}>
              <ellipse cx="39" cy="38" rx="35.500" ry="34.500" stroke="#d2cfcf" strokeWidth="6" />
              <path d="M19 40 L39 20 L59 40" stroke="#d2cfcf" strokeWidth="4.500" strokeLinecap="butt" strokeLinejoin="miter" />
              <path d="M24 41 L39 26 L54 41 V57 H43V47h-7v10H24z" fill="#d2cfcf" />
            </Svg>
          </button>
        </div>
      </div>
      <div className="w-[440px] shrink-0 pt-7 pl-[193px]">
        <button type="button" aria-label="Petunjuk" className="block">
          <Svg w={70} h={72}>
            <path d="M25 51q0-5-6-11a22 23 0 1 1 32 0q-6 6-6 11z" fill="#fdbf3a" stroke="#111" strokeWidth="3" />
            <rect x="23" y="52" width="24" height="7" rx="2" fill="#7d97b4" stroke="#111" strokeWidth="2.500" />
            <path d="M26 59h18l-1 11H27z" fill="#a4b8cc" stroke="#111" strokeWidth="2.500" />
            <path d="M26 64h18" stroke="#111" strokeWidth="2" />
            <path d="M28 20q0-7 7-7t7 7q0 5-5 7-2 1-2 6M35 39v.5" stroke="#111" strokeWidth="8" />
            <path d="M28 20q0-7 7-7t7 7q0 5-5 7-2 1-2 6M35 39v.5" stroke="#fff" strokeWidth="4" />
            <path d="M3 6l5 4M3 24h2M3 43l5-4M67 6l-5 4M67 24h-2M67 43l-5-4" stroke="#111" strokeWidth="3" />
          </Svg>
        </button>
      </div>
      <div className="w-[172px] shrink-0 pt-[41px]">
        <button type="button" className="flex h-[53px] w-[129px] items-center gap-[13px] border-2 border-black bg-gradient-to-b from-[#b3152c] to-[#8a0f1d] pb-[2px] pl-[11px] text-left font-[Lato,sans-serif] text-[15px] leading-[19px] font-bold text-[#f8e8ea]">
          <Svg s={32}>
            <circle cx="16" cy="16" r="16" fill="#fff" />
            <path d="M10.500 10.500l11 11M21.500 10.500l-11 11" stroke="#a0162a" strokeWidth="4.500" strokeLinecap="butt" />
          </Svg>
          <span>HAPUS<br />DATA</span>
        </button>
      </div>
      <div className="w-[275px] shrink-0 pt-[46px]">
        <button type="button" className="flex items-end font-[Lato,sans-serif] text-[17px] font-bold text-white">
          <span className="-mr-1 mb-[2px] flex h-[38px] w-[135px] items-center justify-center rounded-l-lg border-2 border-[#032c03] bg-[#079a07] pr-1 shadow-[0_4px_4px_rgba(0,0,0,.4)]">Impor GSheet</span>
          <Svg w={39} h={48}>
            <path d="M2 4q0-3 3-3h22l11 12v34H2z" fill="#1fb414" stroke="#062c06" strokeWidth="2.200" />
            <path d="M27 1v12h11z" fill="#b4f078" stroke="#062c06" strokeWidth="2" />
            <path d="M8 21h22v14H8zM8 25.500h22M8 30h22M19 21v14" fill="#eee" stroke="#111" strokeWidth="1.800" />
            <path d="M8 39h1M12 39h8" stroke="#062c06" strokeWidth="1.800" />
          </Svg>
        </button>
      </div>
      <div className="min-w-0 flex-1 overflow-x-clip">
        <p className="pl-[19px] font-[Lato,sans-serif] text-[19px] leading-7 font-bold text-[#ffff00]">Link Google Sheet:</p>
        <p className="pl-[19px] font-[Lato,sans-serif] text-[19px] leading-[29px] font-bold whitespace-pre text-[#f8c4c4]">{"(tekan delete (x) lalu copas link dari google sheet dengan pengaturan Bagikan >>  Siapa saja"}</p>
      </div>
    </div>
  );
}

function LinkBar() {
  return (
    <div className="absolute top-[57px] right-0 left-[1158px] flex h-[37px] items-center bg-[#ffffcc] pl-[18px]">
      <button type="button" aria-label="Hapus tautan" className="absolute -top-px -left-10">
        <Svg w={46} h={40}>
          <ellipse cx="23" cy="20" rx="21.500" ry="18.500" fill="#f8555c" stroke="#111" strokeWidth="2" />
          <path d="M15 12l16 16M31 12L15 28" stroke="#111" strokeWidth="8" />
          <path d="M15 12l16 16M31 12L15 28" stroke="#e4eefa" strokeWidth="4" />
        </Svg>
      </button>
      <a href="#sheet" className="overflow-hidden font-['Liberation_Sans',Arial,sans-serif] text-[11px] whitespace-nowrap text-[#0000c8] underline">
        https://docs.google.com/spreadsheets/d/1i5a4E7Evzns_S7sAIAAdGOeVgE98zAUBvI507QIVdLw/edit?resourcekey=&amp;gid=1998695253#gid=1998695253
      </a>
    </div>
  );
}

function Heading() {
  return (
    <div className="flex h-[87px] shrink-0 font-[Lato,sans-serif] font-bold text-black [font-variant-ligatures:none]">
      <div className="flex w-[276px] shrink-0 gap-[11px] pt-5 pl-[69px]">
        <button type="button" aria-label="Pindai" className="self-start">
          <Svg w={50} h={50}>
            <rect x="9" y="1" width="32" height="24" rx="1.500" fill="#fd9a3c" stroke="#111" strokeWidth="1.600" />
            <path d="M27 2q11 5 12 22H28z" fill="#fdb468" />
            <path d="M9 29v20h32V29" stroke="#111" strokeWidth="1.600" strokeDasharray="1.500 3" />
            <rect x="13" y="30" width="24" height="16" rx="1.500" fill="#fcd85c" stroke="#111" strokeWidth="1.600" />
            <path d="M1 21h3v3h42v-3h3v9h-3v-3H4v3H1z" fill="#4a90e0" stroke="#14305c" strokeWidth="1.500" />
          </Svg>
        </button>
        <button type="button" aria-label="Cari data" className="self-start">
          <Svg w={51} h={50}>
            <rect x="1" y="3" width="48" height="42" rx="2" fill="#fff" stroke="#111" strokeWidth="1.800" />
            <path d="M1 10V5q0-2 2-2h44q2 0 2 2v5z" fill="#6fd4ec" stroke="#111" strokeWidth="1.600" />
            <path d="M6 6.500h.1M10 6.500h.1M14 6.500h.1M23 6.500h21M34 16h4M41 16h4M36 21h9M38 26h7" stroke="#111" strokeWidth="1.700" />
            <path d="M31 38l10 9" stroke="#111" strokeWidth="6" />
            <path d="M33 40l8 7" stroke="#b4b8c4" strokeWidth="3" />
            <circle cx="20" cy="27" r="12" fill="#cfeafc" stroke="#111" strokeWidth="4.500" />
            <circle cx="20" cy="27" r="12" stroke="#5c94dc" strokeWidth="2.200" />
            <path d="M20 26v6M20 21.500v.1" stroke="#111" strokeWidth="2.400" />
          </Svg>
        </button>
      </div>
      <h2 className="w-[886px] shrink-0 pt-[11px] text-[30px] leading-9">Database Laporan</h2>
      <div className="pt-4 leading-8 whitespace-nowrap">
        <p className="text-[22px] leading-8">Sekolah Negeri Nusantara (Terakreditasi A)</p>
        <p className="text-[19px] leading-8">KEDISIPLINAN SISWA</p>
      </div>
    </div>
  );
}

const Th = ({ children }: { children: ReactNode }) => (
  <th scope="col" className="h-[71px] border-r border-b border-black p-0 pb-1 pl-[18px] text-left text-[20px] leading-[29px] font-bold whitespace-nowrap first:border-l">{children}</th>
);

const Td = ({ children }: { children: ReactNode }) => (
  <td className="h-[29px] border-b border-black p-0 pt-[2px] pl-[18px] text-[20px] leading-[26px] whitespace-pre first:pl-[19px]">{children}</td>
);

function DataTable() {
  return (
    <table className="ml-[38px] w-[1960px] shrink-0 table-fixed border-separate border-spacing-0 font-[Lato,sans-serif] text-black [font-variant-ligatures:none]">
      <colgroup>
        <col className="w-[234px]" />
        <col className="w-[236px]" />
        <col className="w-[236px]" />
        <col className="w-[415px]" />
        <col className="w-[238px]" />
        <col className="w-[131px]" />
        <col className="w-[131px]" />
        <col />
      </colgroup>
      <thead className="bg-[#651316] text-white">
        <tr>
          <Th>Tanggal Input<br /><span className="font-normal">(Opsional)</span></Th>
          <Th>Kelas</Th>
          <Th>No Induk</Th>
          <Th>Nama Pelanggar</Th>
          <Th>Tanggal Kejadian</Th>
          <Th>Kode Poin</Th>
          <Th>Jumlah<br />Poin</Th>
          <Th>Nama Pelapor (Opsional)</Th>
        </tr>
      </thead>
      <tbody>
        {ROWS.map((r, i) => (
          <tr key={i}>
            <Td>{r[0]}</Td>
            <Td>{r[1]}</Td>
            <Td>{r[2]}</Td>
            <Td>{r[3]}</Td>
            <Td>{r[0]}</Td>
            <Td>{r[4]}</Td>
            <Td>{r[5]}</Td>
            <Td>{r[6]}</Td>
          </tr>
        ))}
      </tbody>
    </table>
  );
}

function VerticalBar() {
  return (
    <div className="flex w-[26px] shrink-0 flex-col items-center border-r border-[#8c9198] bg-[#dce1e8]">
      <div className="flex h-3 w-full justify-center border border-[#7c8084] bg-white pt-[3px]"><span className="h-px w-4 bg-[#777]" /></div>
      <button type="button" aria-label="Gulir ke atas" className="grid h-[46px] place-items-center pb-[22px]">
        <Svg w={16} h={9}><path d="M0 9L8 0l8 9z" fill="#4c4c50" /></Svg>
      </button>
      <div className="flex h-[120px] w-full flex-col items-center justify-center gap-[2px] rounded-[2px] border border-[#8c9198] bg-gradient-to-r from-[#f4f6f9] to-[#dfe3e9]">
        <span className="h-px w-2 bg-[#777]" />
        <span className="h-px w-2 bg-[#777]" />
        <span className="h-px w-2 bg-[#777]" />
      </div>
      <button type="button" aria-label="Gulir ke bawah" className="mt-auto pb-2">
        <Svg w={16} h={9}><path d="M0 0h16L8 9z" fill="#4c4c50" /></Svg>
      </button>
    </div>
  );
}

function HorizontalBar() {
  return (
    <div className="flex h-[27px] shrink-0 border-b-2 border-[#9398a0] bg-gradient-to-b from-[#d8dce3] to-[#dfe4ec]">
      <button type="button" aria-label="Gulir ke kiri" className="grid w-[331px] shrink-0 items-center justify-start pl-2">
        <Svg w={9} h={18}><path d="M9 0v18L0 9z" fill="#4c4c50" /></Svg>
      </button>
      <div className="flex w-[914px] items-center justify-center gap-px rounded-[2px] border border-[#8c9198] bg-gradient-to-b from-[#f2f5f9] to-[#dde1e7]">
        <span className="h-2 w-px bg-[#777]" />
        <span className="h-2 w-px bg-[#777]" />
        <span className="h-2 w-px bg-[#777]" />
        <span className="h-2 w-px bg-[#777]" />
      </div>
      <div className="ml-auto flex items-center pr-[29px]">
        <button type="button" aria-label="Gulir ke kanan" className="pr-2"><Svg w={9} h={18}><path d="M0 0v18l9-9z" fill="#4c4c50" /></Svg></button>
        <span className="flex h-6 w-[11px] items-center border border-[#7c8084] bg-white pl-[2px]"><span className="h-4 w-px bg-[#777]" /></span>
      </div>
    </div>
  );
}

function StatusBar() {
  return (
    <footer className="flex h-8 shrink-0 items-center border-t border-white bg-gradient-to-b from-[#e4e7ea] to-[#bcc0c5] pb-[2px] text-[15px] text-[#444]">
      <span className="w-[59px] pl-2">Ready</span>
      <span className="w-[82px] pl-2">Calculate</span>
      <span className="flex h-7 w-11 items-center justify-center border-x border-[#8f949a]">
        <Svg w={22} h={20}>
          <path d="M1 1h20v18H1z" fill="#fff" stroke="#3c5c94" strokeWidth="1.400" />
          <path d="M1 1h20v4H1z" fill="#3c70d0" />
          <path d="M1 9h20M1 14h20M8 5v14M14 5v14" stroke="#7c9cc8" />
          <circle cx="5" cy="5" r="4.500" fill="#dc4a2c" />
        </Svg>
      </span>
      <div className="ml-auto flex h-full items-center">
        <span className="mr-1 h-7 w-px bg-[#8f949a]" />
        <button type="button" aria-label="Normal" className="grid h-[29px] w-7 place-items-center rounded-[3px] border border-[#c8a03c] bg-gradient-to-b from-[#fcd468] to-[#fff090]">
          <Svg w={20} h={16}><path d="M1 1h18v14H1zM1 5.500h18M1 10h18M7 1v14M13 1v14" fill="#fff" stroke="#555" strokeWidth="1.400" /></Svg>
        </button>
        <button type="button" aria-label="Tata letak halaman" className="ml-1">
          <Svg w={20} h={19}><path d="M1 1h18v17H1z" fill="#a4a8ac" stroke="#666" strokeWidth="1.800" /><path d="M5 3.500h10v12H5z" fill="#fff" stroke="#666" /><path d="M7 7h6M7 9.500h6M7 12h6" stroke="#777" /></Svg>
        </button>
        <button type="button" aria-label="Pratinjau hentian halaman" className="ml-2">
          <Svg w={20} h={19}><path d="M1 1h18v17H1z" fill="#a4a8ac" stroke="#666" strokeWidth="1.800" /><path d="M3 2h5v9H3zM9 2h5v9H9z" fill="#fff" stroke="#666" /></Svg>
        </button>
        <span className="ml-3 w-[42px] text-center whitespace-nowrap">100%</span>
        <button type="button" aria-label="Perkecil" className="ml-[7px]">
          <Svg s={24}><circle cx="12" cy="12" r="11" fill="#f2f3f5" stroke="#74787e" strokeWidth="1.400" /><path d="M7 12h10" stroke="#666" strokeWidth="3" strokeLinecap="butt" /></Svg>
        </button>
        <input
          type="range"
          aria-label="Perbesaran"
          defaultValue={50}
          className="h-6 w-[150px] appearance-none bg-[linear-gradient(#8a8e94,#8a8e94)] bg-[length:100%_1px] bg-center bg-no-repeat [&::-webkit-slider-thumb]:h-5 [&::-webkit-slider-thumb]:w-3 [&::-webkit-slider-thumb]:appearance-none [&::-webkit-slider-thumb]:rounded-b-[6px] [&::-webkit-slider-thumb]:border [&::-webkit-slider-thumb]:border-[#666] [&::-webkit-slider-thumb]:bg-[#f4f5f7]"
        />
        <button type="button" aria-label="Perbesar" className="mr-[3px]">
          <Svg s={24}><circle cx="12" cy="12" r="11" fill="#f2f3f5" stroke="#74787e" strokeWidth="1.400" /><path d="M6.500 12h11M12 6.500v11" stroke="#666" strokeWidth="3" strokeLinecap="butt" /></Svg>
        </button>
      </div>
    </footer>
  );
}

export default function App() {
  return (
    <div className="flex h-screen flex-col overflow-hidden bg-white font-['Open_Sans','Noto_Sans',sans-serif]">
      <TitleBar />
      <Tabs />
      <Ribbon />
      <div className="h-[3px] shrink-0 bg-[#d0d4da]" />
      <div className="flex min-h-0 flex-1">
        <main className="relative flex min-w-0 flex-1 flex-col overflow-hidden bg-[#ebebeb] bg-[linear-gradient(#f1f1f1_1px,transparent_1px),linear-gradient(90deg,#f1f1f1_1px,transparent_1px)] bg-[length:5px_5px]">
          <Banner />
          <LinkBar />
          <Heading />
          <DataTable />
        </main>
        <VerticalBar />
        <div className="w-[3px] shrink-0 bg-[#eceef1]" />
      </div>
      <HorizontalBar />
      <StatusBar />
    </div>
  );
}
